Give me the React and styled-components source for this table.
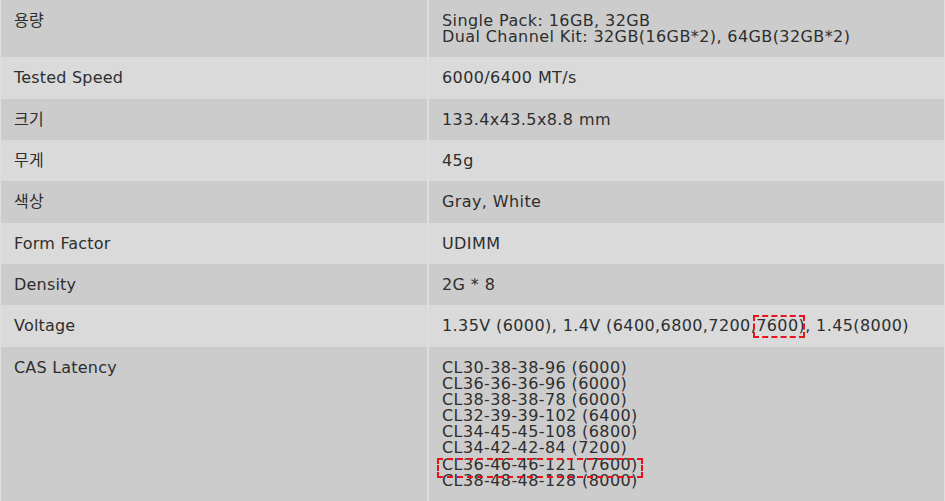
import React from "react";
import styled, { createGlobalStyle } from "styled-components";

const Global = createGlobalStyle`
  html, body { margin: 0; padding: 0; background: #dedede; }
  body { font-family: "DejaVu Sans", "Noto Sans CJK KR", sans-serif; }
`;

const Table = styled.div`
  display: grid;
  grid-template-columns: 426px 1fr;
  column-gap: 2px;
  padding: 0 1px;
  width: 945px;
  box-sizing: border-box;
  background: #dedede;
`;

const Cell = styled.div`
  background: ${(p) => (p.$alt ? "#dadada" : "#cccccc")};
  padding: 13px 13px 12.2px;
  font-size: 16px;
  color: #2e2e2e;
  white-space: nowrap;
  letter-spacing: ${(p) => (p.$value ? "0.4px" : "0.2px")};
`;

const Line = styled.div`
  height: 16.15px;
  line-height: 16px;
`;

const Mark = styled.span`
  position: relative;
  display: inline-block;
  &::after {
    content: "";
    position: absolute;
    top: ${(p) => p.$t}px;
    bottom: ${(p) => p.$b}px;
    left: ${(p) => p.$l}px;
    right: ${(p) => p.$r}px;
    border: 2px dashed #e8141b;
    pointer-events: none;
  }
`;

const rows = [
  {
    k: "용량",
    v: [
      "Single Pack: 16GB, 32GB",
      "Dual Channel Kit: 32GB(16GB*2), 64GB(32GB*2)",
    ],
  },
  { k: "Tested Speed", v: ["6000/6400 MT/s"] },
  { k: "크기", v: ["133.4x43.5x8.8 mm"] },
  { k: "무게", v: ["45g"] },
  { k: "색상", v: ["Gray, White"] },
  { k: "Form Factor", v: ["UDIMM"] },
  { k: "Density", v: ["2G * 8"] },
  {
    k: "Voltage",
    v: [
      <>
        1.35V (6000), 1.4V (6400,6800,7200,
        <Mark $t={-3} $b={-4} $l={-3} $r={-6}>7600</Mark>
        ), 1.45(8000)
      </>,
    ],
  },
  {
    k: "CAS Latency",
    v: [
      "CL30-38-38-96 (6000)",
      "CL36-36-36-96 (6000)",
      "CL38-38-38-78 (6000)",
      "CL32-39-39-102 (6400)",
      "CL34-45-45-108 (6800)",
      "CL34-42-42-84 (7200)",
      <Mark $t={1} $b={-5} $l={-5} $r={-5}>CL36-46-46-121 (7600)</Mark>,
      "CL38-48-48-128 (8000)",
    ],
  },
];

export default function App() {
  return (
    <>
      <Global />
      <Table>
        {rows.map((r, i) => (
          <React.Fragment key={i}>
            <Cell $alt={i % 2 === 1}>
              <Line>{r.k}</Line>
            </Cell>
            <Cell $alt={i % 2 === 1} $value>
              {r.v.map((l, j) => (
                <Line key={j}>{l}</Line>
              ))}
            </Cell>
          </React.Fragment>
        ))}
      </Table>
    </>
  );
}
